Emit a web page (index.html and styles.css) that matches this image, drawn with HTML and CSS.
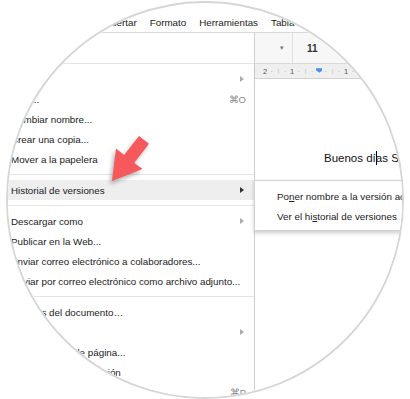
FILE: index.html
```html
<html>
<head>
    <title>Historial de versiones</title>
    <link rel="stylesheet" href="styles.css">
</head>
<body>
    <div class="lens">
        <div class="screen">
            <div class="menubar">
                <span>Archivo</span>
                <span>Editar</span>
                <span>Ver</span>
                <span>Insertar</span>
                <span>Formato</span>
                <span>Herramientas</span>
                <span>Tabla</span>
                <span>Complementos</span>
                <span>Ayuda</span>
            </div>
            <div class="workspace">
                <div class="dropdown">
                    <div class="item">Compartir...</div>
                    <div class="sep"></div>
                    <div class="item">Nuevo<span class="sub"></span></div>
                    <div class="item">Abrir...<span class="key">⌘O</span></div>
                    <div class="item">Cambiar nombre...</div>
                    <div class="item">Crear una copia...</div>
                    <div class="item">Mover a la papelera</div>
                    <div class="sep"></div>
                    <div class="item active">Historial de versiones<span class="sub"></span></div>
                    <div class="sep"></div>
                    <div class="item">Descargar como<span class="sub"></span></div>
                    <div class="item">Publicar en la Web...</div>
                    <div class="item">Enviar correo electrónico a colaboradores...</div>
                    <div class="item">Enviar por correo electrónico como archivo adjunto...</div>
                    <div class="sep"></div>
                    <div class="item">Detalles del documento…</div>
                    <div class="item">Idioma<span class="sub"></span></div>
                    <div class="item">Configuración de página...</div>
                    <div class="item">Vista previa de impresión</div>
                    <div class="item">Imprimir<span class="key">⌘P</span></div>
                </div>
                <div class="editor">
                    <div class="toolbar">
                        <div class="font-box"><span class="caret">▾</span></div>
                        <div class="tb-sep"></div>
                        <div class="size">11</div>
                    </div>
                    <div class="ruler">
                        <span class="num">2</span>
                        <span class="dot">·</span>
                        <span class="tick">|</span>
                        <span class="dot">·</span>
                        <span class="num">1</span>
                        <span class="dot">·</span>
                        <span class="tick">|</span>
                        <span class="dot">·</span>
                        <span class="marker">
                            <svg width="10" height="7" viewBox="0 0 10 7"><path d="M0 0h10v3L5 7 0 3z" fill="#4f8ef2"/></svg>
                        </span>
                        <span class="dot">·</span>
                        <span class="tick">|</span>
                        <span class="dot">·</span>
                        <span class="num">1</span>
                        <span class="dot">·</span>
                    </div>
                    <div class="page">
                        <p class="doc-title">Buenos dí<span class="cursor"></span>as Solvetic</p>
                    </div>
                </div>
            </div>
        </div>

        <div class="submenu">
            <div class="item">Po<u>n</u>er nombre a la versión actual</div>
            <div class="item">Ver el hi<u>s</u>torial de versiones</div>
        </div>

        <svg class="pointer" width="60" height="70" viewBox="100 125 60 70">
            <polygon points="112,181 142.5,169 134.2,162.8 149,143.8 139,136 124.2,155 116,148.6" fill="#f7585c"/>
        </svg>
    </div>
</body>
</html>
```

FILE: styles.css
```css
body {
    background-color: #fff;
    margin: 0;
    padding: 0;
    font-family: "Liberation Sans", Arial, sans-serif;
}
.lens {
    position: relative;
    width: 394px;
    height: 394px;
    margin: 1px 0 0 6px;
    border: 2px solid #d6d6d6;
    border-radius: 50%;
    overflow: hidden;
    background-color: #fff;
}
.screen {
    margin-left: -23px;
    width: 440px;
}
.menubar {
    display: flex;
    height: 18px;
    padding-top: 11px;
    line-height: 18px;
    border-bottom: 1px solid #dadada;
    font-size: 9.8px;
    color: #222;
    white-space: nowrap;
}
.menubar span {
    padding: 0 6.5px;
}
.workspace {
    display: flex;
    height: 400px;
}
.dropdown {
    flex-shrink: 0;
    box-sizing: border-box;
    width: 270px;
    padding-top: 5px;
    background: #fff;
    border-right: 1px solid #cfcfcf;
}
.item {
    display: flex;
    align-items: center;
    height: 20px;
    padding: 0 8px 0 26px;
    font-size: 9.8px;
    color: #222;
    white-space: nowrap;
}
.item.active {
    background: #eeeeee;
}
.sep {
    height: 1px;
    margin: 5px 0;
    background: #e6e6e6;
}
.sub {
    margin-left: auto;
    margin-right: 2px;
    width: 0;
    height: 0;
    border-left: 4px solid #aaa;
    border-top: 3px solid transparent;
    border-bottom: 3px solid transparent;
}
.active .sub {
    border-left-color: #333;
}
.key {
    margin-left: auto;
    color: #888;
    font-size: 9.5px;
}
.editor {
    flex: 1;
    display: flex;
    flex-direction: column;
}
.toolbar {
    display: flex;
    align-items: center;
    height: 30px;
    background: #f7f7f7;
    border-bottom: 1px solid #dcdcdc;
}
.font-box {
    width: 37px;
    box-sizing: border-box;
    padding-right: 8px;
    text-align: right;
}
.caret {
    font-size: 7px;
    color: #777;
}
.tb-sep {
    align-self: stretch;
    width: 1px;
    background: #e0e0e0;
}
.size {
    padding-left: 14px;
    font-size: 10px;
    font-weight: bold;
    color: #333;
}
.ruler {
    display: flex;
    align-items: center;
    height: 14px;
    padding-left: 6.6px;
    background: #efefef;
    border-bottom: 1px solid #d2d2d2;
    box-shadow: 0 1px 2px rgba(0, 0, 0, 0.12);
    font-size: 7.5px;
    color: #555;
}
.ruler span {
    width: 6.75px;
    text-align: center;
    flex-shrink: 0;
}
.ruler .dot {
    color: #aaa;
}
.ruler .tick {
    color: #bbb;
    font-size: 6px;
}
.ruler .marker {
    display: flex;
    justify-content: center;
    margin-top: -2px;
}
.page {
    flex: 1;
    padding: 72px 0 0 69px;
    background: #fff;
}
.doc-title {
    margin: 0;
    font-size: 11.5px;
    line-height: 14px;
    color: #111;
    white-space: nowrap;
}
.cursor {
    display: inline-block;
    width: 1px;
    height: 14px;
    margin-right: -1px;
    vertical-align: -3px;
    background: #000;
}
.submenu {
    position: absolute;
    left: 246px;
    top: 177px;
    width: 220px;
    padding: 5px 0 4px;
    background: #fff;
    border: 1px solid rgba(0, 0, 0, 0.18);
    box-shadow: 0 2px 4px rgba(0, 0, 0, 0.2);
}
.submenu .item {
    padding-left: 22px;
}
.pointer {
    position: absolute;
    left: 92px;
    top: 122px;
    overflow: visible;
    filter: drop-shadow(-2px 3px 2px rgba(0, 0, 0, 0.3));
}
```
